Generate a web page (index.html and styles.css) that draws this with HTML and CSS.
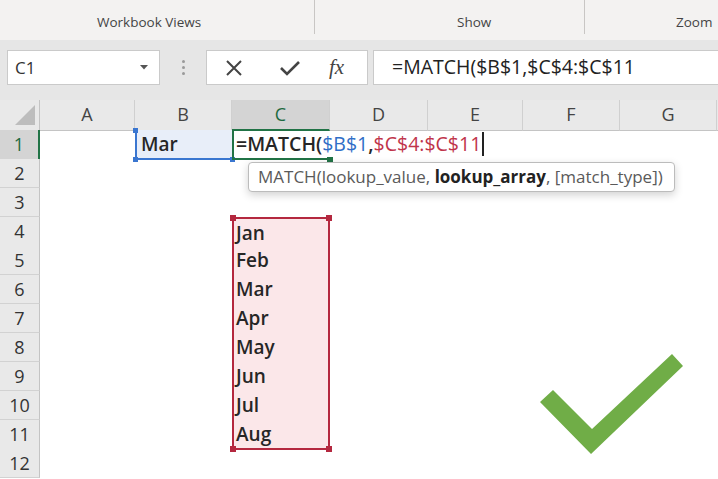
FILE: index.html
```html
<!DOCTYPE html>
<html>
<head>
<meta charset="utf-8">
<link rel="stylesheet" href="styles.css">
</head>
<body>
<div class="ribbon">
  <div class="group g1"><span>Workbook Views</span></div>
  <div class="group g2"><span>Show</span></div>
  <div class="group g3"><span>Zoom</span></div>
</div>
<div class="fbar">
  <div class="namebox"><span>C1</span><svg class="caret" width="8" height="5" viewBox="0 0 8 5"><path d="M0 0H8L4 4.5Z" fill="#555"/></svg></div>
  <div class="grip"><i></i><i></i><i></i></div>
  <div class="fxbox">
    <svg class="ico" width="18" height="18" viewBox="0 0 18 18"><path d="M2 2L16 16M16 2L2 16" stroke="#444" stroke-width="2" fill="none"/></svg>
    <svg class="ico" width="22" height="18" viewBox="0 0 22 18"><path d="M2 9L8 15L20 3" stroke="#444" stroke-width="2.6" fill="none"/></svg>
    <span class="fx">fx</span>
  </div>
  <div class="formula">=MATCH($B$1,$C$4:$C$11</div>
</div>
<div class="sheet">
  <div class="row hdr">
    <div class="corner"><svg width="40" height="30" viewBox="0 0 40 30"><path d="M35 5V25H15Z" fill="#bdbdbd"/></svg></div>
    <div class="ch">A</div><div class="ch">B</div><div class="ch act">C</div><div class="ch">D</div><div class="ch">E</div><div class="ch">F</div><div class="ch">G</div><div class="ch last"></div>
  </div>
  <div class="row">
    <div class="rh act">1</div><div class="cell"></div>
    <div class="cell b1">Mar<i class="dot d-tl"></i><i class="dot d-bl"></i><i class="dot d-br"></i></div>
    <div class="cell c1"><span class="fn">=MATCH(</span><span class="blue">$B$1</span><span class="fn">,</span><span class="red">$C$4:$C$11</span><span class="cursor"></span><i class="gdot"></i></div>
  </div>
  <div class="row"><div class="rh">2</div></div>
  <div class="row"><div class="rh">3</div></div>
  <div class="row"><div class="rh">4</div><div class="cell colC rng rtop">Jan</div></div>
  <div class="row"><div class="rh">5</div><div class="cell colC rng">Feb</div></div>
  <div class="row"><div class="rh">6</div><div class="cell colC rng">Mar</div></div>
  <div class="row"><div class="rh">7</div><div class="cell colC rng">Apr</div></div>
  <div class="row"><div class="rh">8</div><div class="cell colC rng">May</div></div>
  <div class="row"><div class="rh">9</div><div class="cell colC rng">Jun</div></div>
  <div class="row"><div class="rh">10</div><div class="cell colC rng">Jul</div></div>
  <div class="row"><div class="rh">11</div><div class="cell colC rng rbot">Aug</div></div>
  <div class="row"><div class="rh">12</div></div>

  <div class="tip">MATCH(lookup_value, <b>lookup_array</b>, [match_type])</div>
  <svg class="check" width="155" height="110" viewBox="0 0 155 110"><path d="M5 52L18 40L57 79L137 4L148 16L56 104Z" fill="#70ad47"/></svg>
</div>
</body>
</html>
```
FILE: styles.css
```css
* { box-sizing: border-box; margin: 0; padding: 0; }
html, body { width: 718px; height: 479px; overflow: hidden; }
body { font-family: "Open Sans", "Noto Sans", sans-serif; background: #fff; color: #222; }

.ribbon { display: flex; height: 40px; background: #f3f2f1; }
.group { height: 34px; display: flex; align-items: center; padding-top: 10px; font-size: 13.5px; color: #444; }
.g1 { width: 315px; padding-left: 97px; border-right: 1px solid #c8c6c4; }
.g2 { width: 270px; padding-left: 142px; border-right: 1px solid #c8c6c4; }
.g3 { flex: 1; padding-left: 91px; }

.fbar { display: flex; align-items: flex-start; height: 60px; background: #e6e6e6; padding: 10px 0 0 7px; }
.namebox { width: 153px; height: 35px; background: #fff; border: 1px solid #cacaca; display: flex; align-items: center; justify-content: space-between; padding: 0 11px 0 7px; font-size: 17px; color: #333; }
.grip { width: 46px; height: 35px; display: flex; flex-direction: column; align-items: center; justify-content: center; gap: 3px; }
.grip i { display: block; width: 3px; height: 3px; border-radius: 50%; background: #9a9a9a; }
.fxbox { width: 162px; height: 35px; background: #fff; border: 1px solid #cacaca; display: flex; align-items: center; padding-left: 18px; }
.fxbox .ico:first-child { margin-right: 36px; }
.fxbox .ico:nth-child(2) { margin-right: 28px; }
.fx { font-family: "Liberation Serif", serif; font-style: italic; font-size: 21px; color: #444; }
.formula { flex: 1; margin-left: 5px; height: 35px; background: #fff; border: 1px solid #cacaca; border-right: none; padding-left: 18px; font-size: 19.5px; line-height: 32px; color: #222; white-space: nowrap; }

.sheet { position: relative; height: 379px; }
.row { display: grid; grid-template-columns: 40px 95px 97px 98px 98px 95px 97px 97px 1fr; height: 29px; }
.row.hdr { height: 30px; background: #e9e9e9; }
.corner { border-right: 1px solid #c4c4c4; border-bottom: 1px solid #c4c4c4; }
.corner svg { display: block; }
.ch { border-right: 1px solid #d0d0d0; border-bottom: 1px solid #c4c4c4; text-align: center; font-size: 18px; line-height: 29px; color: #444; }
.ch.last { border-right: none; }
.ch.act { background: #d4d4d4; color: #1d6a40; border-bottom: 2px solid #217346; }
.rh { background: #e9e9e9; border-right: 1px solid #c4c4c4; border-bottom: 1px solid #d2d2d2; text-align: center; font-size: 18px; line-height: 28px; color: #333; }
.rh.act { background: #d4d4d4; color: #1d6a40; border-right: 2px solid #217346; }

.cell { position: relative; font-size: 19px; font-weight: 600; line-height: 28px; color: #262626; padding-left: 4px; white-space: nowrap; }
.colC { grid-column: 4; }
.b1 { background: #e8eef9; border-left: 2px solid #3a76d0; border-bottom: 2px solid #3a76d0; padding-left: 4px; }
.dot { position: absolute; width: 5px; height: 5px; background: #3a76d0; }
.d-tl { left: -4px; top: -2px; }
.d-bl { left: -4px; bottom: -4px; }
.d-br { right: -3px; bottom: -4px; }
.c1 { border-left: 2px solid #217346; border-bottom: 2px solid #217346; padding-left: 2px; z-index: 2; line-height: 27px; font-size: 19.5px; font-weight: 400; }
.fn { font-weight: 600; }
.gdot { position: absolute; right: -3px; bottom: -4px; width: 6px; height: 5px; background: #217346; }
.blue { color: #2f6ec7; }
.red { color: #c0344a; }
.cursor { display: inline-block; width: 1.5px; height: 24px; background: #222; vertical-align: -5px; margin-left: 1px; }

.rng { background: #fbe7e9; border-left: 2px solid #b4283f; border-right: 2px solid #b4283f; padding-left: 2px; }
.rtop { border-top: 2px solid #b4283f; }
.rbot { border-bottom: 2px solid #b4283f; }
.rtop::before, .rtop::after, .rbot::before, .rbot::after { content: ""; position: absolute; width: 6px; height: 6px; background: #b4283f; }
.rtop::before { left: -4px; top: -4px; }
.rtop::after { right: -4px; top: -4px; }
.rbot::before { left: -4px; bottom: -4px; }
.rbot::after { right: -4px; bottom: -4px; }

.tip { position: absolute; left: 248px; top: 62px; width: 427px; height: 30px; background: #fff; border: 1px solid #bcbcbc; border-radius: 4px; box-shadow: 0 3px 8px rgba(0,0,0,0.18); font-size: 17px; line-height: 28px; color: #5a5a5a; padding-left: 9px; white-space: nowrap; z-index: 3; }
.tip b { color: #222; font-weight: 700; }
.check { position: absolute; left: 535px; top: 250px; }
```
